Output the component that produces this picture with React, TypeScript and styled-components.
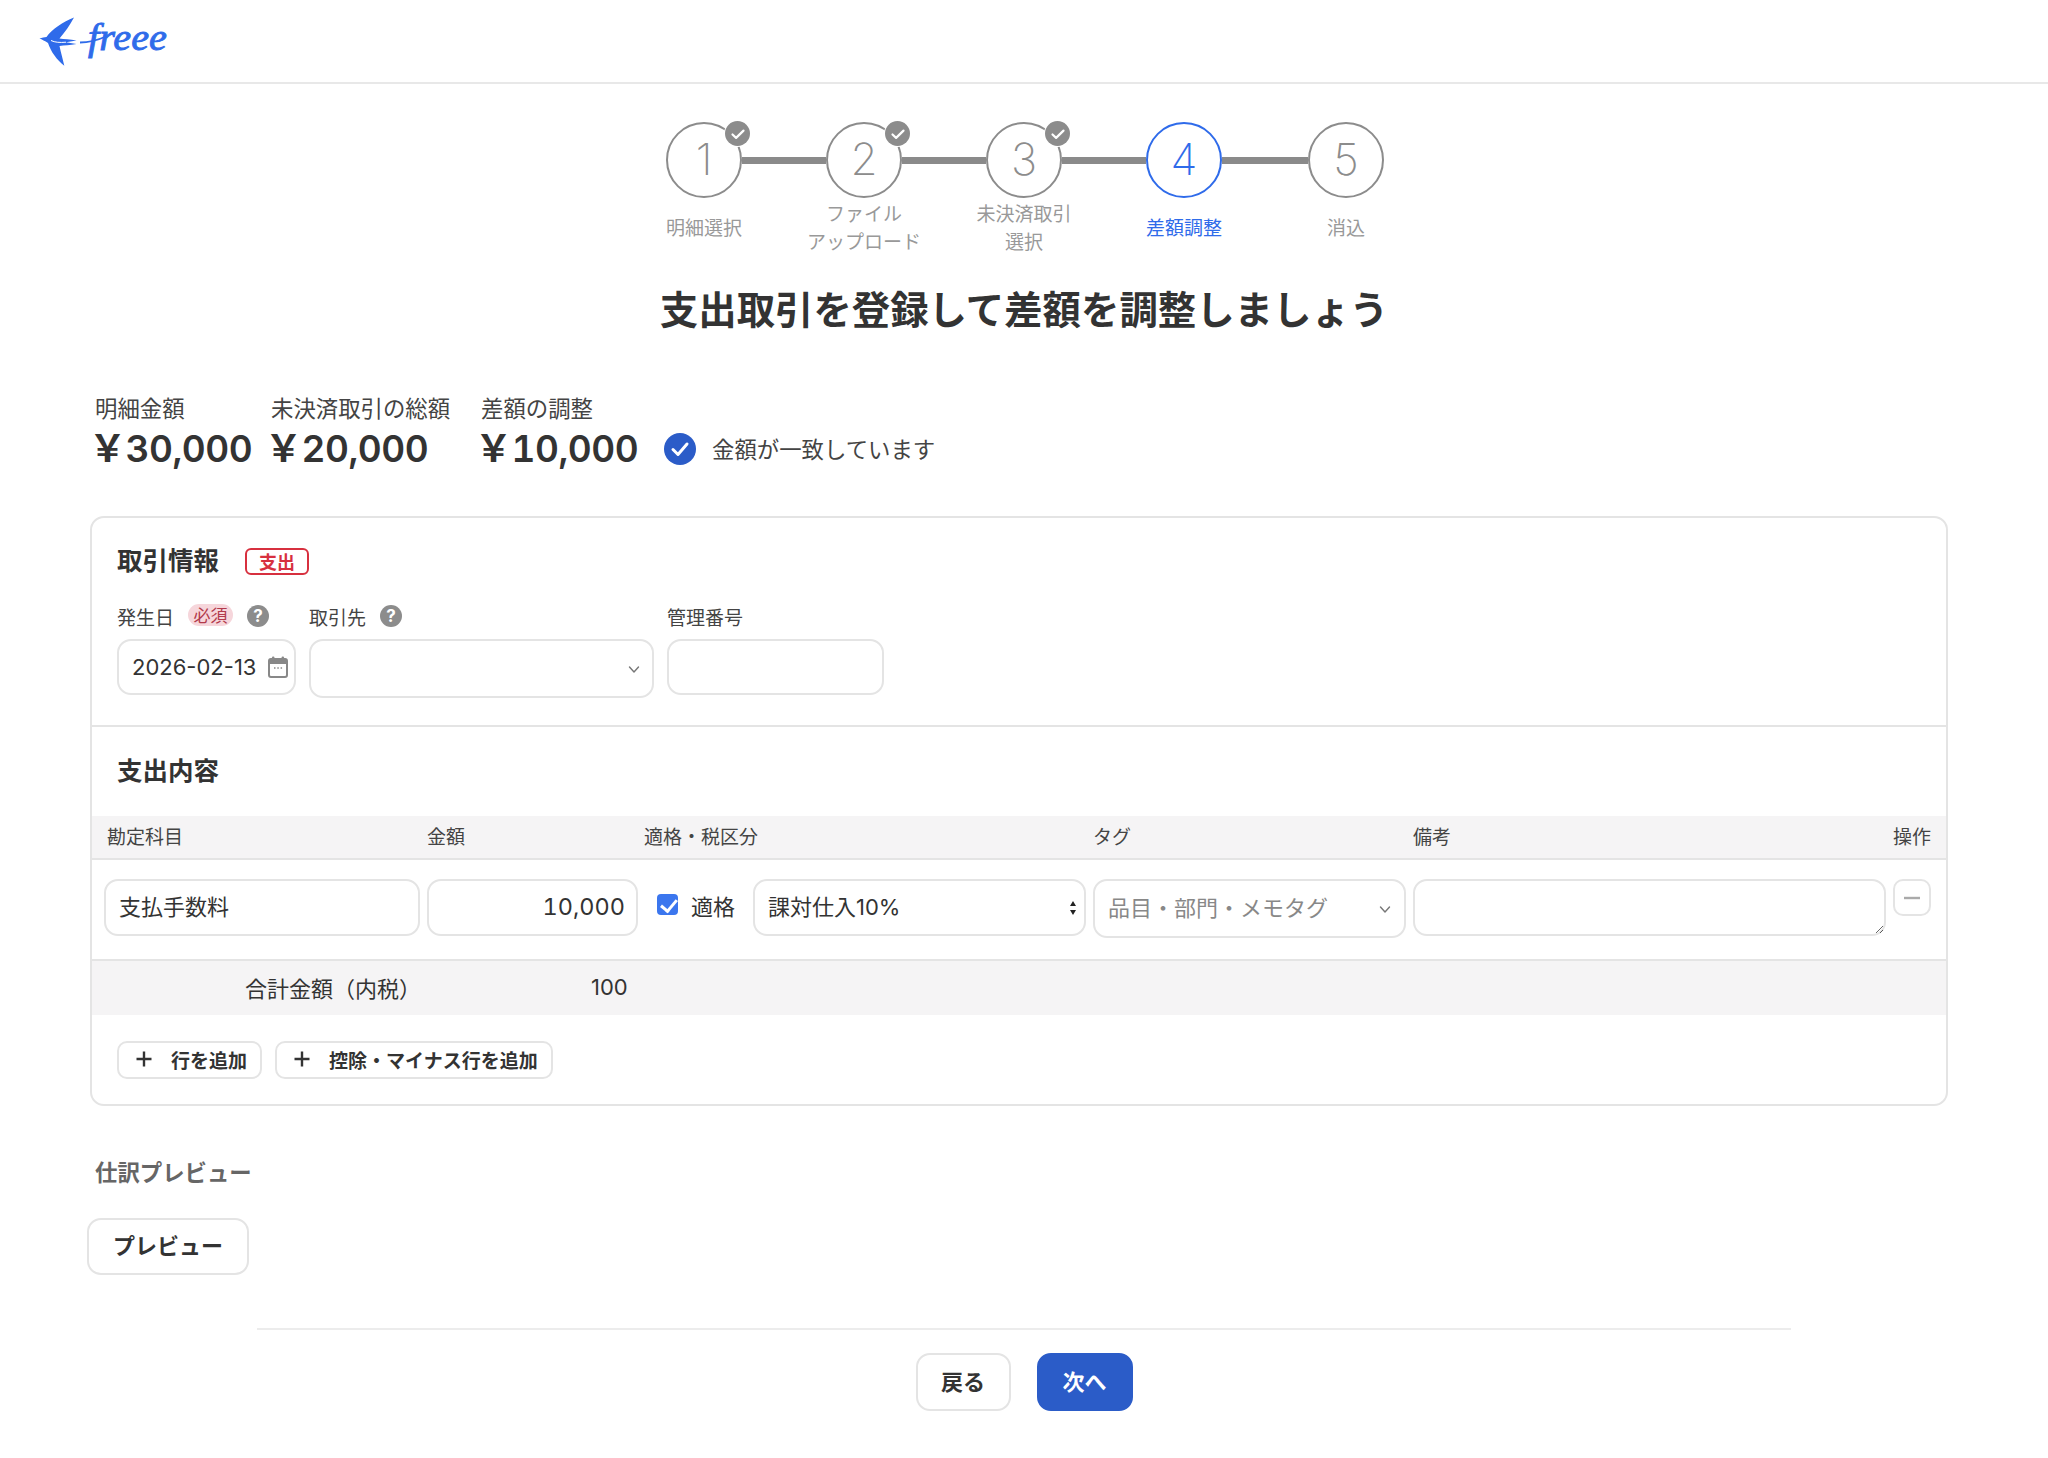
import styled, { createGlobalStyle } from "styled-components";

const GlobalStyle = createGlobalStyle`
  * {
    box-sizing: border-box;
  }
  body {
    margin: 0;
    background: #fff;
    color: #333;
    font-family: Inter, "Noto Sans CJK JP", sans-serif;
  }
`;

const BLUE = "#2b5cc8";
const BRIGHT = "#2f6bea";
const LINE = "#e4e4e4";

const steps = [
  { no: 1, label: ["明細選択"], done: true },
  { no: 2, label: ["ファイル", "アップロード"], done: true },
  { no: 3, label: ["未決済取引", "選択"], done: true },
  { no: 4, label: ["差額調整"], active: true },
  { no: 5, label: ["消込"] },
];

const CheckMark = () => (
  <svg width="16" height="16" viewBox="0 0 16 16" fill="none">
    <path d="M2.5 8.5l3.6 3.4L13.5 4.6" stroke="#fff" strokeWidth="2.2" strokeLinecap="round" strokeLinejoin="round" />
  </svg>
);

const Help = () => (
  <HelpIcon>?</HelpIcon>
);

const Chevron = () => (
  <svg width="14" height="14" viewBox="0 0 14 14" fill="none">
    <path d="M2.5 5l4.5 5 4.5-5" stroke="#777" strokeWidth="1.4" strokeLinecap="round" strokeLinejoin="round" />
  </svg>
);

const Plus = () => (
  <svg width="20" height="20" viewBox="0 0 20 20" fill="none">
    <path d="M10 2.5v15M2.5 10h15" stroke="#333" strokeWidth="2.4" />
  </svg>
);

const App = () => {
  return (
    <>
      <GlobalStyle />
      <Header>
        <svg width="150" height="60" viewBox="0 0 150 60">
          <path
            d="M9.5 28.5C12 27.5 14.5 27.5 16.5 27C22 19 33 12 44 7.5C40 15 35 22 29.5 28.5C34 29 40 29.5 46.5 30.5L36 32.2L46.5 34C40 35 34 35.5 29.5 36C31 43 33 50 34.3 55.7C27 50 21 42 18 33C15 31 12 29.5 9.5 28.5Z"
            fill={BRIGHT}
          />
          <path d="M21 30.5C25 32.5 30 32.7 36 32.2" stroke="#fff" strokeWidth="1" fill="none" />
          <path d="M50 32.5C58 32.5 68 30 76 26.5" stroke={BRIGHT} strokeWidth="1.8" fill="none" />
          <LogoText x="58" y="39.5" textLength="79" lengthAdjust="spacingAndGlyphs">
            freee
          </LogoText>
        </svg>
      </Header>

      <Stepper>
        <StepRow>
          {steps.map((s, i) => (
            <StepItem key={s.no}>
              <Circle $active={s.active}>
                {s.no}
                {s.done && (
                  <DoneBadge>
                    <CheckMark />
                  </DoneBadge>
                )}
              </Circle>
              {i < steps.length - 1 && <Connector $wide={i === 3} />}
            </StepItem>
          ))}
        </StepRow>
        <LabelRow>
          {steps.map((s) => (
            <StepLabel key={s.no} $active={s.active}>
              {s.label.map((l) => (
                <span key={l}>{l}</span>
              ))}
            </StepLabel>
          ))}
        </LabelRow>
      </Stepper>

      <Title>支出取引を登録して差額を調整しましょう</Title>

      <Main>
        <Summary>
          <SummaryCol $w={176}>
            <SummaryLabel>明細金額</SummaryLabel>
            <SummaryValue>￥30,000</SummaryValue>
          </SummaryCol>
          <SummaryCol $w={210}>
            <SummaryLabel>未決済取引の総額</SummaryLabel>
            <SummaryValue>￥20,000</SummaryValue>
          </SummaryCol>
          <SummaryCol $w={183}>
            <SummaryLabel>差額の調整</SummaryLabel>
            <SummaryValue>￥10,000</SummaryValue>
          </SummaryCol>
          <Match>
            <MatchIcon>
              <svg width="22" height="22" viewBox="0 0 22 22" fill="none">
                <path d="M4 11.5l5 5L18 6" stroke="#fff" strokeWidth="3" strokeLinecap="round" strokeLinejoin="round" />
              </svg>
            </MatchIcon>
            <MatchText>金額が一致しています</MatchText>
          </Match>
        </Summary>

        <Card>
          <InfoSection>
            <SectionHead>
              <SectionTitle>取引情報</SectionTitle>
              <OutBadge>支出</OutBadge>
            </SectionHead>
            <Fields>
              <Field $w={179}>
                <FieldLabel>
                  発生日
                  <Required>必須</Required>
                  <Help />
                </FieldLabel>
                <InputBox>
                  <TextInput value="2026-02-13" readOnly />
                  <IconSlot $right={7}>
                    <svg width="22" height="24" viewBox="0 0 22 24" fill="none">
                      <rect x="2" y="4" width="18" height="18" rx="2" fill="#fff" stroke="#888" strokeWidth="2" />
                      <path d="M2 5.5a2 2 0 012-2h14a2 2 0 012 2V9H2z" fill="#888" />
                      <rect x="5" y="1.5" width="2.4" height="4" rx="1" fill="#888" />
                      <rect x="14.6" y="1.5" width="2.4" height="4" rx="1" fill="#888" />
                      <path d="M7 13h1.5M10.3 13h1.5M13.6 13h1.5" stroke="#888" strokeWidth="1.6" />
                    </svg>
                  </IconSlot>
                </InputBox>
              </Field>
              <Field $w={345}>
                <FieldLabel>
                  取引先
                  <Help />
                </FieldLabel>
                <InputBox>
                  <TextInput value="" readOnly $h={59} />
                  <IconSlot $right={13}>
                    <Chevron />
                  </IconSlot>
                </InputBox>
              </Field>
              <Field $w={217}>
                <FieldLabel>管理番号</FieldLabel>
                <TextInput value="" readOnly />
              </Field>
            </Fields>
          </InfoSection>

          <SectionTitleRow>
            <SectionTitle>支出内容</SectionTitle>
          </SectionTitleRow>

          <TableHead>
            <HeadCell $inset={3}>勘定科目</HeadCell>
            <HeadCell>金額</HeadCell>
            <HeadCell $inset={-1} $span={2}>適格・税区分</HeadCell>
            <HeadCell>タグ</HeadCell>
            <HeadCell>備考</HeadCell>
            <HeadCell>操作</HeadCell>
          </TableHead>

          <TableRow>
            <TextInput value="支払手数料" readOnly $h={57} />
            <AmountInput value="10,000" readOnly />
            <QualifiedCell>
              <Check type="checkbox" checked readOnly />
              適格
            </QualifiedCell>
            <InputBox>
              <TextInput value="課対仕入10%" readOnly $h={57} />
              <IconSlot $right={9}>
                <svg width="8" height="18" viewBox="0 0 8 18" fill="#222">
                  <path d="M4 2l3 5H1zM4 16L1 11h6z" />
                </svg>
              </IconSlot>
            </InputBox>
            <InputBox>
              <TextInput placeholder="品目・部門・メモタグ" readOnly $h={59} />
              <IconSlot $right={14}>
                <Chevron />
              </IconSlot>
            </InputBox>
            <Memo readOnly />
            <MinusButton>
              <svg width="16" height="4" viewBox="0 0 16 4">
                <rect width="16" height="2.4" y="0.8" fill="#aaa" />
              </svg>
            </MinusButton>
          </TableRow>

          <TotalRow>
            <TotalLabel>合計金額（内税）</TotalLabel>
            <TotalValue>100</TotalValue>
          </TotalRow>

          <Actions>
            <AddButton>
              <Plus />
              <span>行を追加</span>
            </AddButton>
            <AddButton>
              <Plus />
              <span>控除・マイナス行を追加</span>
            </AddButton>
          </Actions>
        </Card>

        <PreviewTitle>仕訳プレビュー</PreviewTitle>
        <PreviewButton>プレビュー</PreviewButton>
      </Main>

      <Footer>
        <FooterButton $w={95}>戻る</FooterButton>
        <FooterButton $w={96} $primary>次へ</FooterButton>
      </Footer>
    </>
  );
};

export default App;

const Header = styled.header`
  height: 84px;
  border-bottom: 2px solid #e8e8e8;
  padding: 10px 0 0 30px;
  display: flex;
  align-items: flex-start;
`;

const LogoText = styled.text`
  font-family: "Liberation Serif", serif;
  font-style: italic;
  font-size: 38px;
  fill: ${BRIGHT};
  stroke: ${BRIGHT};
  stroke-width: 0.9px;
`;

const Stepper = styled.div`
  width: 804px;
  margin: 38px 0 0 624px;
`;

const StepRow = styled.div`
  display: flex;
  padding-left: 42px;
`;

const StepItem = styled.div`
  display: flex;
  align-items: center;
`;

const Circle = styled.div<{ $active?: boolean }>`
  position: relative;
  width: 76px;
  height: 76px;
  padding-bottom: 2px;
  border-radius: 50%;
  border: 2px solid ${(p) => (p.$active ? BRIGHT : "#8c8c8c")};
  color: ${(p) => (p.$active ? BRIGHT : "#8c8c8c")};
  display: flex;
  align-items: center;
  justify-content: center;
  font-size: 44px;
  font-weight: 200;
`;

const DoneBadge = styled.span`
  position: absolute;
  top: -3px;
  right: -10px;
  width: 25px;
  height: 25px;
  border-radius: 50%;
  background: #8c8c8c;
  box-shadow: 0 0 0 1px #fff;
  display: flex;
  align-items: center;
  justify-content: center;
`;

const Connector = styled.div<{ $wide?: boolean }>`
  width: ${(p) => (p.$wide ? 86 : 84)}px;
  height: 7px;
  background: #8a8a8a;
`;

const LabelRow = styled.div`
  display: grid;
  grid-template-columns: 160px 160px 160px 160px 164px;
  height: 58px;
  margin-top: 2px;
`;

const StepLabel = styled.div<{ $active?: boolean }>`
  display: flex;
  flex-direction: column;
  align-items: center;
  justify-content: center;
  font-size: 19px;
  line-height: 28px;
  color: ${(p) => (p.$active ? BRIGHT : "#999")};
`;

const Title = styled.h1`
  margin: 25px 0 0;
  text-align: center;
  font-size: 38.4px;
  line-height: 54px;
  font-weight: 700;
  color: #333;
`;

const Main = styled.main`
  padding: 0 100px 0 90px;
`;

const Summary = styled.div`
  display: flex;
  align-items: flex-end;
  margin-top: 57px;
  padding-left: 5px;
`;

const SummaryCol = styled.div<{ $w: number }>`
  width: ${(p) => p.$w}px;
  display: flex;
  flex-direction: column;
`;

const SummaryLabel = styled.div`
  font-size: 22.4px;
  line-height: 30px;
  color: #444;
`;

const SummaryValue = styled.div`
  margin-left: -6px;
  font-size: 37px;
  line-height: 50px;
  font-weight: 600;
  font-variant-numeric: tabular-nums;
  letter-spacing: -0.5px;
  white-space: nowrap;
  color: #333;
`;

const Match = styled.div`
  height: 50px;
  display: flex;
  align-items: center;
  gap: 16px;
`;

const MatchText = styled.span`
  margin-top: -2px;
  font-size: 22.4px;
  color: #444;
`;

const MatchIcon = styled.span`
  width: 32px;
  height: 32px;
  border-radius: 50%;
  background: ${BLUE};
  display: flex;
  align-items: center;
  justify-content: center;
`;

const Card = styled.section`
  margin-top: 42px;
  border: 2px solid ${LINE};
  border-radius: 14px;
  overflow: hidden;
`;

const InfoSection = styled.div`
  padding: 25px 25px 27px;
  border-bottom: 2px solid ${LINE};
`;

const SectionHead = styled.div`
  display: flex;
  align-items: center;
  gap: 26px;
`;

const SectionTitle = styled.h2`
  margin: 0;
  font-size: 25.5px;
  line-height: 36px;
  font-weight: 700;
  color: #333;
`;

const OutBadge = styled.span`
  width: 64px;
  height: 27px;
  border: 2px solid #d7303f;
  border-radius: 6px;
  color: #d7303f;
  font-size: 18px;
  font-weight: 700;
  display: flex;
  align-items: center;
  justify-content: center;
`;

const Fields = styled.div`
  display: flex;
  align-items: flex-start;
  gap: 13px;
  margin-top: 26px;
`;

const Field = styled.div<{ $w: number }>`
  width: ${(p) => p.$w}px;
  display: flex;
  flex-direction: column;
  gap: 10px;
`;

const FieldLabel = styled.div`
  display: flex;
  align-items: center;
  height: 24px;
  padding-bottom: 2px;
  font-size: 19px;
  color: #444;
  white-space: nowrap;
`;

const Required = styled.span`
  width: 45px;
  height: 22px;
  margin: -3px 0 0 14px;
  border-radius: 11px;
  background: #f6d6db;
  color: #b23a4b;
  font-size: 17px;
  display: flex;
  align-items: center;
  justify-content: center;
`;

const HelpIcon = styled.span`
  width: 22px;
  height: 22px;
  margin: 0 0 0 14px;
  border-radius: 50%;
  background: #8c8c8c;
  color: #fff;
  font-size: 17px;
  font-weight: 700;
  display: flex;
  align-items: center;
  justify-content: center;
`;

const InputBox = styled.div`
  position: relative;
  width: 100%;
`;

const TextInput = styled.input<{ $h?: number }>`
  display: block;
  width: 100%;
  height: ${(p) => p.$h || 56}px;
  border: 2px solid ${LINE};
  border-radius: 14px;
  padding: 0 13px ${(p) => (p.$h === 57 ? 5 : 1)}px;
  background: #fff;
  font-family: inherit;
  font-size: 22px;
  color: #333;
  outline: none;
  &::placeholder {
    color: #888;
    opacity: 1;
  }
`;

const AmountInput = styled.input`
  display: block;
  width: 100%;
  height: 57px;
  border: 2px solid ${LINE};
  border-radius: 14px;
  padding: 0 11px 3px 13px;
  background: #fff;
  font-family: inherit;
  font-variant-numeric: tabular-nums;
  font-size: 23.5px;
  color: #333;
  text-align: right;
  outline: none;
`;

const IconSlot = styled.span<{ $right: number }>`
  position: absolute;
  top: 50%;
  right: ${(p) => p.$right}px;
  transform: translateY(-50%);
  display: flex;
  background: #fff;
`;

const SectionTitleRow = styled.div`
  padding: 26px 25px 27px;
`;

const columns = "316px 211px 101px 333px 313px 473px 38px";

const TableHead = styled.div`
  display: grid;
  grid-template-columns: ${columns};
  column-gap: 7px;
  height: 44px;
  padding: 0 0 3px 12px;
  align-items: center;
  background: #f5f4f5;
  border-bottom: 2px solid ${LINE};
`;

const HeadCell = styled.div<{ $inset?: number; $span?: number }>`
  font-size: 19px;
  color: #444;
  margin-left: ${(p) => p.$inset || 0}px;
  grid-column: span ${(p) => p.$span || 1};
  white-space: nowrap;
`;

const TableRow = styled.div`
  display: grid;
  grid-template-columns: ${columns};
  column-gap: 7px;
  height: 99px;
  padding: 19px 0 0 12px;
  align-items: start;
`;

const QualifiedCell = styled.label`
  display: flex;
  align-items: center;
  gap: 13px;
  height: 57px;
  padding: 0 0 6px 12px;
  font-size: 22px;
  color: #333;
  white-space: nowrap;
`;

const Check = styled.input`
  position: relative;
  appearance: none;
  width: 21px;
  height: 21px;
  margin: 0;
  border-radius: 4px;
  background: #3b76ee;
  &::after {
    content: "";
    position: absolute;
    left: 7px;
    top: 2px;
    width: 7px;
    height: 13px;
    border: solid #fff;
    border-width: 0 3px 3px 0;
    transform: rotate(40deg);
  }
`;

const Memo = styled.textarea`
  display: block;
  width: 100%;
  height: 57px;
  border: 2px solid ${LINE};
  border-radius: 14px;
  padding: 8px 13px;
  outline: none;
`;

const MinusButton = styled.button`
  width: 38px;
  height: 37px;
  border: 2px solid ${LINE};
  border-radius: 10px;
  padding: 0;
  background: #fff;
  display: flex;
  align-items: center;
  justify-content: center;
`;

const TotalRow = styled.div`
  height: 56px;
  padding-bottom: 3px;
  border-top: 2px solid ${LINE};
  background: #f5f4f5;
  display: flex;
  align-items: center;
  color: #333;
`;

const TotalLabel = styled.div`
  width: 499px;
  padding-left: 153px;
  font-size: 22px;
  white-space: nowrap;
`;

const TotalValue = styled.div`
  font-size: 22px;
`;

const Actions = styled.div`
  display: flex;
  gap: 13px;
  padding: 26px 25px 25px;
`;

const AddButton = styled.button`
  height: 38px;
  border: 2px solid ${LINE};
  border-radius: 10px;
  padding: 0 13px 2px 15px;
  background: #fff;
  display: flex;
  align-items: center;
  gap: 17px;
  font-family: inherit;
  font-size: 19px;
  font-weight: 700;
  color: #333;
`;

const PreviewTitle = styled.h3`
  margin: 51px 0 0 5px;
  font-size: 22.4px;
  line-height: 32px;
  font-weight: 700;
  color: #666;
`;

const PreviewButton = styled.button`
  display: block;
  width: 162px;
  height: 57px;
  margin: 29px 0 0 -3px;
  padding: 0 0 6px;
  border: 2px solid ${LINE};
  border-radius: 14px;
  background: #fff;
  font-family: inherit;
  font-size: 22px;
  font-weight: 700;
  color: #333;
`;

const Footer = styled.footer`
  width: 1534px;
  margin: 53px auto 0;
  padding-top: 23px;
  border-top: 2px solid #ececec;
  display: flex;
  justify-content: center;
  gap: 26px;
`;

const FooterButton = styled.button<{ $primary?: boolean; $w: number }>`
  width: ${(p) => p.$w}px;
  height: 58px;
  padding: 0 0 5px;
  border: 2px solid ${(p) => (p.$primary ? BLUE : LINE)};
  border-radius: 14px;
  background: ${(p) => (p.$primary ? BLUE : "#fff")};
  color: ${(p) => (p.$primary ? "#fff" : "#333")};
  font-family: inherit;
  font-size: 22px;
  font-weight: 700;
`;
